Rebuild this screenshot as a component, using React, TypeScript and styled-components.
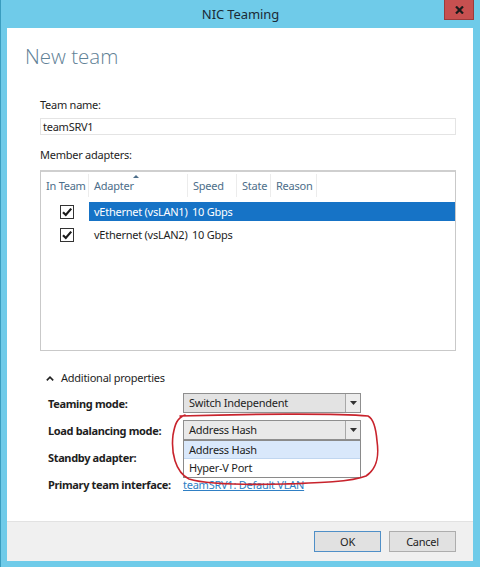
import React from "react";
import styled, { createGlobalStyle } from "styled-components";

const GlobalStyle = createGlobalStyle`
  html, body {
    margin: 0;
    padding: 0;
    background: #6fcbe9;
  }
  * {
    box-sizing: border-box;
  }
`;

const adapters = [
  { name: "vEthernet (vsLAN1)", speed: "10 Gbps", selected: true },
  { name: "vEthernet (vsLAN2)", speed: "10 Gbps", selected: false },
];

const columns = [
  { label: "Adapter", width: 99, sorted: true },
  { label: "Speed", width: 49 },
  { label: "State", width: 34 },
  { label: "Reason", width: 46 },
];

function Check() {
  return (
    <CheckBox>
      <svg width="12" height="12" viewBox="0 0 12 12">
        <path d="M2 6.2 L4.8 9 L10.2 2.6" fill="none" stroke="#1a1a1a" strokeWidth="2.2" />
      </svg>
    </CheckBox>
  );
}

function Combo(props: { value: string; open?: boolean }) {
  return (
    <ComboBox $open={props.open}>
      <ComboValue>{props.value}</ComboValue>
      <ComboArrow>
        <svg width="7" height="4" viewBox="0 0 7 4">
          <path d="M0 0 H7 L3.5 4 Z" fill="#333" />
        </svg>
      </ComboArrow>
    </ComboBox>
  );
}

function NicTeamingDialog() {
  return (
    <Window>
      <TitleBar>
        <span />
        <Title>NIC Teaming</Title>
        <CloseButton>
          <svg width="9" height="8" viewBox="0 0 9 8">
            <path d="M1 0.5 L8 7.5 M8 0.5 L1 7.5" stroke="#1b1b1b" strokeWidth="2.2" />
          </svg>
        </CloseButton>
      </TitleBar>

      <Client>
        <Content>
          <Heading>New team</Heading>

          <Section>
            <FieldLabel>Team name:</FieldLabel>
            <TextBox>teamSRV1</TextBox>

            <FieldLabel $gap={12}>Member adapters:</FieldLabel>
            <ListView>
              <HeaderRow>
                <HeaderCell $width={48}>In Team</HeaderCell>
                {columns.map((c) => (
                  <HeaderCell key={c.label} $width={c.width}>
                    {c.label}
                    {c.sorted && <SortMark />}
                  </HeaderCell>
                ))}
              </HeaderRow>
              <Rows>
                {adapters.map((a) => (
                  <AdapterRow key={a.name}>
                    <CheckCell>
                      <Check />
                    </CheckCell>
                    <RowBody $selected={a.selected}>
                      <Cell $width={98}>{a.name}</Cell>
                      <Cell $width={49}>{a.speed}</Cell>
                    </RowBody>
                  </AdapterRow>
                ))}
              </Rows>
            </ListView>

            <Expander>
              <svg width="8" height="5" viewBox="0 0 8 5">
                <path d="M0.8 4.4 L4 1.2 L7.2 4.4" fill="none" stroke="#222" strokeWidth="1.6" />
              </svg>
              Additional properties
            </Expander>

            <PropertyGrid>
              <PropLabel>Teaming mode:</PropLabel>
              <Combo value="Switch Independent" />

              <PropLabel>Load balancing mode:</PropLabel>
              <ComboHolder>
                <Combo value="Address Hash" open />
                <DropList>
                  <DropItem $hot>Address Hash</DropItem>
                  <DropItem>Hyper-V Port</DropItem>
                </DropList>
              </ComboHolder>

              <PropLabel>Standby adapter:</PropLabel>
              <span />

              <PropLabel>Primary team interface:</PropLabel>
              <Link>teamSRV1: Default VLAN</Link>
            </PropertyGrid>

            {/* hand-drawn marker loop around the load balancing choices */}
            <Annotation width="220" height="90" viewBox="0 0 220 90">
              <path
                d="M15 11 C80 9 170 8 203 11 C209 14 211 24 212 36 C214 50 213 63 201 71 C186 77 150 78 120 79 C80 80 40 79 24 74 C10 67 6 47 8 30 C10 19 12 13 20 10"
                fill="none"
                stroke="#c8232c"
                strokeWidth="1.6"
                strokeLinecap="round"
              />
            </Annotation>
          </Section>
        </Content>

        <Footer>
          <Button $default>OK</Button>
          <Button>Cancel</Button>
        </Footer>
      </Client>
    </Window>
  );
}

const Window = styled.div`
  width: 480px;
  height: 567px;
  display: flex;
  flex-direction: column;
  background: #6fcbe9;
  border-left: 1px solid #3a9dbf;
  font-family: "Noto Sans", "Open Sans", sans-serif;
  font-size: 11px;
  letter-spacing: -0.25px;
  color: #1e1e1e;
  overflow: hidden;
`;

const TitleBar = styled.div`
  height: 28px;
  display: grid;
  grid-template-columns: 1fr auto 1fr;
  align-items: start;
`;

const Title = styled.div`
  padding-top: 5px;
  font-size: 13px;
  letter-spacing: -0.1px;
  color: #1b2a36;
`;

const CloseButton = styled.div`
  justify-self: end;
  width: 30px;
  height: 20px;
  margin-right: 6px;
  background: #c75050;
  border: 1px solid #9c3b3b;
  border-top: none;
  display: flex;
  align-items: center;
  justify-content: center;
`;

const Client = styled.div`
  margin: 0 7px 6px 6px;
  flex: 1;
  display: flex;
  flex-direction: column;
  background: #ffffff;
`;

const Content = styled.div`
  flex: 1;
  padding: 13px 17px 0 18px;
`;

const Heading = styled.div`
  font-family: "Open Sans", "Noto Sans", sans-serif;
  font-weight: 300;
  font-size: 20.5px;
  letter-spacing: 0;
  line-height: 30px;
  color: #5f8196;
`;

const Section = styled.div`
  position: relative;
  padding: 26px 0 0 15px;
  display: flex;
  flex-direction: column;
`;

const FieldLabel = styled.div<{ $gap?: number }>`
  margin-top: ${(p) => p.$gap ?? 0}px;
  line-height: 16px;
`;

const TextBox = styled.div`
  margin-top: 5px;
  height: 17px;
  border: 1px solid #e4e4e4;
  padding-left: 2px;
  line-height: 15px;
`;

const ListView = styled.div`
  margin-top: 7px;
  height: 181px;
  border: 1px solid #c9c9c9;
  border-top: 2px solid #cfcfcf;
`;

const HeaderRow = styled.div`
  display: flex;
  height: 30px;
  padding-top: 2px;
  align-items: flex-start;
`;

const HeaderCell = styled.div<{ $width: number }>`
  position: relative;
  width: ${(p) => p.$width}px;
  height: 23px;
  padding-left: 5px;
  line-height: 23px;
  color: #4d6e8a;
  border-right: 1px solid #ececec;
  white-space: nowrap;
`;

const SortMark = styled.span`
  position: absolute;
  top: 1px;
  left: 44px;
  width: 0;
  height: 0;
  border-left: 3px solid transparent;
  border-right: 3px solid transparent;
  border-bottom: 3px solid #4d6e8a;
`;

const Rows = styled.div`
  display: flex;
  flex-direction: column;
  gap: 4px;
`;

const AdapterRow = styled.div`
  display: flex;
  height: 19px;
`;

const CheckCell = styled.div`
  width: 48px;
  display: flex;
  justify-content: flex-end;
  align-items: center;
  padding-right: 15px;
`;

const CheckBox = styled.div`
  width: 14px;
  height: 14px;
  border: 1px solid #333;
  background: #fff;
  display: flex;
  align-items: center;
  justify-content: center;
`;

const RowBody = styled.div<{ $selected?: boolean }>`
  flex: 1;
  display: flex;
  align-items: center;
  background: ${(p) => (p.$selected ? "#1673c6" : "transparent")};
  color: ${(p) => (p.$selected ? "#ffffff" : "#1e1e1e")};
`;

const Cell = styled.div<{ $width: number }>`
  width: ${(p) => p.$width}px;
  padding-left: 5px;
  white-space: nowrap;
`;

const Expander = styled.div`
  margin-top: 19px;
  margin-left: 6px;
  display: flex;
  align-items: center;
  gap: 7px;
  line-height: 16px;
`;

const PropertyGrid = styled.div`
  margin-top: 7px;
  margin-left: 8px;
  display: grid;
  grid-template-columns: 135px 178px;
  grid-auto-rows: 20px;
  row-gap: 7px;
  align-items: center;
`;

const PropLabel = styled.div`
  font-weight: 700;
  letter-spacing: -0.35px;
  white-space: nowrap;
`;

const ComboHolder = styled.div`
  position: relative;
  z-index: 2;
`;

const ComboBox = styled.div<{ $open?: boolean }>`
  height: 20px;
  display: flex;
  border: 1px solid #8f8f8f;
  background: ${(p) => (p.$open ? "#e9e9e9" : "#e3e3e3")};
`;

const ComboValue = styled.div`
  flex: 1;
  padding-left: 5px;
  line-height: 18px;
  border-right: 1px solid #a8a8a8;
`;

const ComboArrow = styled.div`
  width: 14px;
  display: flex;
  align-items: center;
  justify-content: center;
  background: #ececec;
`;

const DropList = styled.div`
  position: absolute;
  top: 20px;
  left: 0;
  width: 178px;
  border: 1px solid #8a8a8a;
  background: #fff;
`;

const DropItem = styled.div<{ $hot?: boolean }>`
  height: 18px;
  line-height: 17px;
  padding-left: 5px;
  background: ${(p) => (p.$hot ? "#d9e8fb" : "#fff")};
  border-bottom: ${(p) => (p.$hot ? "1px solid #c0d6f0" : "none")};
`;

const Link = styled.div`
  color: #2f7fc4;
  text-decoration: underline;
  white-space: nowrap;
`;

const Annotation = styled.svg`
  position: absolute;
  left: 140px;
  top: 334px;
  pointer-events: none;
  z-index: 3;
`;

const Footer = styled.div`
  height: 40px;
  display: flex;
  justify-content: flex-end;
  align-items: center;
  gap: 8px;
  padding: 0 17px 0 0;
  background: #f0f0f0;
  border-top: 1px solid #e2e2e2;
`;

const Button = styled.div<{ $default?: boolean }>`
  width: 67px;
  height: 21px;
  display: flex;
  align-items: center;
  justify-content: center;
  background: #e1e1e1;
  border: 1px solid ${(p) => (p.$default ? "#4f8fc7" : "#adadad")};
`;

export default function App() {
  return (
    <>
      <GlobalStyle />
      <NicTeamingDialog />
    </>
  );
}
